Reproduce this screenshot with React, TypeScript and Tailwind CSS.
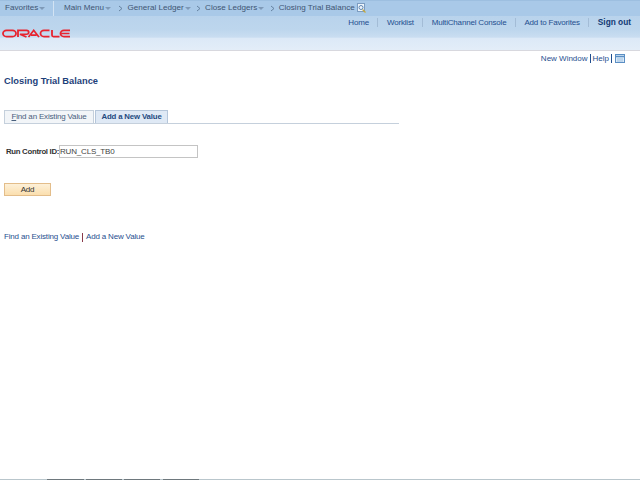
const font = { fontFamily: '"Liberation Sans", Arial, sans-serif' }

function Caret() {
    return <span className="ml-[1px] h-0 w-0 border-x-[3px] border-t-[3px] border-x-transparent border-t-[#7f9ab8]" />
}

function Crumb({ label, caret = true }: { label: string; caret?: boolean }) {
    return (
        <span className="flex items-center">
            <svg className="mr-[3px] h-[7px] w-[7px]" viewBox="0 0 7 7">
                <path d="M2 1l3 2.500-3 2.500" fill="none" stroke="#5f7a99" strokeWidth="0.900" />
            </svg>
            <span>{label}</span>
            {caret && <Caret />}
        </span>
    )
}

function HeaderLink({ label, bold }: { label: string; bold?: boolean }) {
    if (bold) return <span className="text-[8.3px] font-bold tracking-normal text-[#123a73]">{label}</span>
    return <span className="text-[#1f4f8f]">{label}</span>
}

function Divider() {
    return <span className="h-[9px] w-px bg-[#a3bcd6]" />
}

export default function App() {
    return (
        <div className="relative flex h-[480px] w-[640px] flex-col overflow-hidden bg-white text-[8px] tracking-[-0.18px]" style={font}>
            <div className="flex h-[16px] items-center border-t border-[#9dbfe0] bg-[#a9c9e8] text-[8.1px] tracking-normal text-[#3f5573]">
                <div className="flex h-full w-[53px] items-center pl-[5px]">
                    <span>Favorites</span>
                    <Caret />
                </div>
                <span className="h-full w-px bg-[#d3e3f3]" />
                <div className="flex items-center gap-[4.4px] pl-[10px]">
                    <span className="mr-[2px] flex items-center">
                        <span>Main Menu</span>
                        <Caret />
                    </span>
                    <Crumb label="General Ledger" />
                    <Crumb label="Close Ledgers" />
                    <span className="flex items-center">
                        <Crumb label="Closing Trial Balance" caret={false} />
                        <svg className="ml-[2px] h-[10px] w-[9px]" viewBox="0 0 9 10">
                            <rect x="0.5" y="0.5" width="7" height="8" fill="#eef5fb" stroke="#7c9cc0" />
                            <circle cx="4" cy="4.500" r="2" fill="none" stroke="#5f86b3" />
                            <path d="M5.500 6.500l3 3" stroke="#c9a93a" strokeWidth="1.300" />
                        </svg>
                    </span>
                </div>
            </div>
            <div className="flex h-[35px] justify-between border-b border-[#d8d8de] bg-[linear-gradient(to_bottom,#b9d3ec_0%,#bdd6ed_40%,#c9ddf1_62%,#dce9f7_66%,#e3edf8_100%)]">
                <svg className="ml-[2px] mt-[13px] h-[9px] w-[70px]" viewBox="0 0 70 10" preserveAspectRatio="none">
                    <g fill="none" stroke="#e8232e" strokeWidth="1.800">
                        <rect x="1" y="1.500" width="13" height="7" rx="3.500" />
                        <path d="M16 9V1.500h8.500a2 2 0 0 1 0 4.400H18l6.500 3.100" />
                        <path d="M26.500 9l5.200-7.500L37 9M29 6.800h5.500" />
                        <path d="M47.500 1.500h-5.500a3.500 3.500 0 0 0 0 7h5.500" />
                        <path d="M50 1v6a1.500 1.500 0 0 0 1.500 1.500h6" />
                        <path d="M68 1.500h-6a3.500 3.500 0 0 0 0 7h6M59.500 5h8" />
                    </g>
                </svg>
                <div className="mr-[9px] flex h-[13px] items-center gap-[8.5px]">
                    <HeaderLink label="Home" />
                    <Divider />
                    <HeaderLink label="Worklist" />
                    <Divider />
                    <HeaderLink label="MultiChannel Console" />
                    <Divider />
                    <HeaderLink label="Add to Favorites" />
                    <Divider />
                    <HeaderLink label="Sign out" bold />
                </div>
            </div>
            <div className="flex h-[13px] items-center justify-end gap-[2px] pr-[15px] pt-[2px] tracking-normal text-[#1f4f8f]">
                <span>New Window</span>
                <span className="h-[9px] w-px bg-[#1f4f8f]" />
                <span>Help</span>
                <span className="h-[9px] w-px bg-[#1f4f8f]" />
                <svg className="ml-[1px] h-[9px] w-[10px]" viewBox="0 0 10 9">
                    <rect x="0.5" y="0.5" width="9" height="8" fill="#dcebf8" stroke="#5b8fc4" />
                    <path d="M0 2.500h10" stroke="#5b8fc4" strokeWidth="1.500" />
                    <path d="M2 5h6M2 7h6" stroke="#9fc0e0" />
                </svg>
            </div>
            <h1 className="ml-[4px] mt-[11px] text-[9.3px] font-bold leading-[12px] tracking-normal text-[#1e3f7a]">Closing Trial Balance</h1>
            <div className="ml-[4px] mt-[23px] flex w-[395px] items-end gap-[1px] border-b border-[#c5d0dc]">
                <div className="flex h-[13px] w-[90px] items-center justify-center border border-b-0 border-[#c5d0dc] bg-[#f2f5f8] text-[#49607d]">
                    <span><span className="underline">F</span>ind an Existing Value</span>
                </div>
                <div className="flex h-[13px] w-[73px] items-center justify-center border border-b-0 border-[#b5c6da] bg-[#dfe9f5] text-[7.8px] font-bold tracking-[-0.15px] text-[#24497f]">
                    Add a New Value
                </div>
            </div>
            <div className="ml-[6px] mt-[21px] flex items-center">
                <span className="w-[53px] whitespace-nowrap pt-[1px] text-[7.8px] font-bold tracking-[-0.3px] text-[#333]">Run Control ID:</span>
                <div className="flex h-[13px] w-[139px] items-center border border-[#c4c4c4] pt-[1px] text-[#444]">RUN_CLS_TB0</div>
            </div>
            <button className="ml-[4px] mt-[25px] h-[13px] w-[47px] border border-[#e3bd8a] bg-gradient-to-b from-[#fdf0d8] to-[#fbdfae] text-[8px] text-[#333]">Add</button>
            <div className="ml-[4px] mt-[35px] flex items-center gap-[3px] text-[#1f4f8f]">
                <span>Find an Existing Value</span>
                <span className="h-[9px] w-px bg-[#8a3a4a]" />
                <span>Add a New Value</span>
            </div>
            <div className="absolute bottom-0 left-0 flex h-px w-full bg-[#b9c6cc]">
                <span className="ml-[47px] w-[37px] bg-[#6e787d]" />
                <span className="ml-[2px] w-[36px] bg-[#6e787d]" />
                <span className="ml-[2px] w-[36px] bg-[#6e787d]" />
                <span className="ml-[3px] w-[36px] bg-[#6e787d]" />
            </div>
        </div>
    )
}
